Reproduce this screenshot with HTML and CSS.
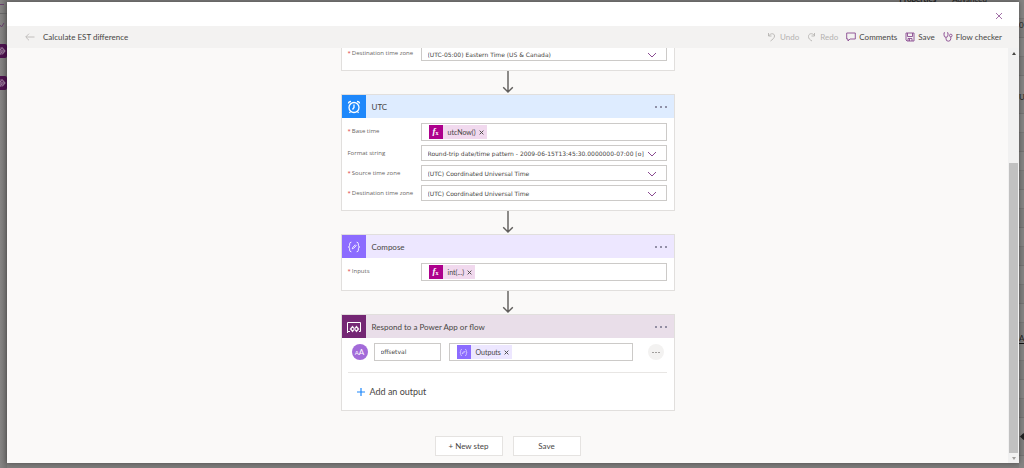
FILE: index.html
```html
<!DOCTYPE html>
<html lang="en">
<head>
<meta charset="utf-8">
<title>Calculate EST difference</title>
<link rel="stylesheet" href="styles.css">
</head>
<body>
<svg class="defs" aria-hidden="true">
  <symbol id="chevron" viewBox="0 0 10 6"><path d="M1 1l4 4 4-4"/></symbol>
  <symbol id="down" viewBox="0 0 14 24"><path d="M7 0v22M2 17l5 5 5-5"/></symbol>
  <symbol id="cross" viewBox="0 0 8 8"><path d="M1 1l6 6M7 1L1 7"/></symbol>
  <symbol id="braces" viewBox="0 0 16 16"><path d="M5 2.500Q3 2.500 3 4.500v1.500Q3 8 1.500 8 3 8 3 10v1.500q0 2 2 2M11 2.500q2 0 2 2v1.500q0 2 1.500 2-1.500 0-1.500 2v1.500q0 2-2 2M6 10l.5-1.500L9.500 5.500l1 1-3 3z"/></symbol>
  <symbol id="diamonds" viewBox="0 0 10 10"><path d="M4 1.500L.8 5 4 8.500 6 6.200M6 8.500L9.200 5 6 1.500 4 3.800M4 3.500L5.500 5 4 6.500 2.500 5zM6 3.500L7.500 5 6 6.500"/></symbol>
</svg>

<div class="page-behind" aria-hidden="true">
  <div class="rail">
    <i class="rail-dash"></i><i class="rail-line"></i>
    <svg class="rail-pen" viewBox="0 0 5 6"><path d="M0 3l1.500 2L4 1"/></svg>
    <span class="rail-tile tile-a"><svg viewBox="0 0 10 10"><use href="#diamonds"/></svg></span>
    <span class="rail-tile tile-b"><svg viewBox="0 0 10 10"><use href="#diamonds"/></svg></span>
  </div>
  <div class="tabs"><b>Properties</b><span>Advanced</span></div>
  <div class="props"><span class="prop-a">0</span><span class="prop-b">U</span><span class="prop-c">A</span><i class="prop-d"></i></div>
</div>

<main class="dialog">
  <header class="titlebar">
    <button class="close" aria-label="Close"><svg viewBox="0 0 8 8"><use href="#cross"/></svg></button>
  </header>
  <div class="toolbar">
    <button class="back" aria-label="Back"><svg viewBox="0 0 10 8"><path d="M9.500 4H1M4 .7L.7 4 4 7.300"/></svg></button>
    <h1>Calculate EST difference</h1>
    <div class="commands">
      <button class="off" disabled><svg viewBox="0 0 10 10"><path d="M1.500 1v3h3M1.500 4C3.500 1 7.500 1 7.500 4c0 2-2 3.500-4 5"/></svg>Undo</button>
      <button class="off" disabled><svg viewBox="0 0 10 10"><path d="M7.500 1v3h-3M7.500 3.500C5 .5 1.500 1.500 1.500 4.500c0 2 1 3 3.500 4.500"/></svg>Redo</button>
      <button><svg viewBox="0 0 10 10"><path d="M.7 1h8.600v6H4L2 9V7H.7z"/></svg>Comments</button>
      <button><svg viewBox="0 0 10 10"><path d="M1 1h8v8H2L1 8zM2.500 1v3.500h5V1M3 9V6.500h4V9M4.500 7v2"/></svg>Save</button>
      <button><svg viewBox="0 0 10 10"><path d="M2 .8H1V3q0 2.300 2 2.300T5 3V.8H4M3 5.300v1.500q0 2.400 2.300 2.400t2.500-2.400V5"/><circle cx="7.800" cy="3.500" r="1.300"/></svg>Flow checker</button>
    </div>
  </div>

  <div class="workspace">
    <div class="canvas">
      <section class="card card-cut">
        <div class="fields">
          <div class="field">
            <label for="tz0"><em>*</em>Destination time zone</label>
            <div class="pick"><select id="tz0"><option>(UTC-05:00) Eastern Time (US &amp; Canada)</option></select><svg viewBox="0 0 10 6"><use href="#chevron"/></svg></div>
          </div>
        </div>
      </section>
      <svg class="arrow" viewBox="0 0 14 24"><use href="#down"/></svg>

      <section class="card">
        <header class="card-head utc">
          <span class="badge"><svg viewBox="0 0 16 16"><circle cx="8" cy="8.500" r="5"/><path d="M8 5.500v3L6.500 10.500M2.500 4.500Q2.500 2.500 5 2.500M13.500 4.500Q13.500 2.500 11 2.500M4.500 12.500L3.500 14M11.500 12.500l1 1.500"/></svg></span>
          <h2>UTC</h2><button class="more" aria-label="UTC menu"><i></i><i></i><i></i></button>
        </header>
        <div class="fields">
          <div class="field">
            <label for="base"><em>*</em>Base time</label>
            <div class="box"><span class="token fx"><b><i>f</i><sub>x</sub></b>utcNow()<button aria-label="Remove utcNow()"><svg viewBox="0 0 8 8"><use href="#cross"/></svg></button></span><input id="base"></div>
          </div>
          <div class="field">
            <label for="fmt">Format string</label>
            <div class="pick"><select id="fmt"><option>Round-trip date/time pattern - 2009-06-15T13:45:30.0000000-07:00 [o]</option></select><svg viewBox="0 0 10 6"><use href="#chevron"/></svg></div>
          </div>
          <div class="field">
            <label for="src"><em>*</em>Source time zone</label>
            <div class="pick"><select id="src"><option>(UTC) Coordinated Universal Time</option></select><svg viewBox="0 0 10 6"><use href="#chevron"/></svg></div>
          </div>
          <div class="field">
            <label for="dst"><em>*</em>Destination time zone</label>
            <div class="pick"><select id="dst"><option>(UTC) Coordinated Universal Time</option></select><svg viewBox="0 0 10 6"><use href="#chevron"/></svg></div>
          </div>
        </div>
      </section>
      <svg class="arrow" viewBox="0 0 14 24"><use href="#down"/></svg>

      <section class="card">
        <header class="card-head compose">
          <span class="badge"><svg viewBox="0 0 16 16"><use href="#braces"/></svg></span>
          <h2>Compose</h2><button class="more" aria-label="Compose menu"><i></i><i></i><i></i></button>
        </header>
        <div class="fields">
          <div class="field">
            <label for="inputs"><em>*</em>Inputs</label>
            <div class="box"><span class="token fx"><b><i>f</i><sub>x</sub></b>int(...)<button aria-label="Remove int(...)"><svg viewBox="0 0 8 8"><use href="#cross"/></svg></button></span><input id="inputs"></div>
          </div>
        </div>
      </section>
      <svg class="arrow" viewBox="0 0 14 24"><use href="#down"/></svg>

      <section class="card">
        <header class="card-head respond">
          <span class="badge"><svg viewBox="0 0 16 16"><path d="M4 12.500H1.500v-9h13v9H13M1.500 12.500V14"/><path class="solid" d="M6.500 6.500l3 3.500-3 3.500-3-3.500zM10.500 6.500l3 3.500-3 3.500-3-3.500z"/><path class="hole" d="M6.500 8.800L7.600 10l-1.100 1.200L5.400 10zM10.500 8.800l1.100 1.200-1.100 1.200L9.400 10z"/></svg></span>
          <h2>Respond to a Power App or flow</h2><button class="more" aria-label="Respond menu"><i></i><i></i><i></i></button>
        </header>
        <div class="output">
          <span class="kind"><small>A</small>A</span>
          <input class="name" aria-label="Output name" value="offsetval">
          <div class="box"><span class="token out"><b><svg viewBox="0 0 16 16"><use href="#braces"/></svg></b>Outputs<button aria-label="Remove Outputs"><svg viewBox="0 0 8 8"><use href="#cross"/></svg></button></span><input aria-label="Output value"></div>
          <button class="round" aria-label="Output menu"><i></i><i></i><i></i></button>
        </div>
        <button class="add"><svg viewBox="0 0 8 8"><path d="M4 0v8M0 4h8"/></svg>Add an output</button>
      </section>

      <div class="actions"><button>+ New step</button><button>Save</button></div>
    </div>
    <div class="scroll" aria-hidden="true"><i class="up"></i><i class="thumb"></i><i class="dn"></i></div>
  </div>
</main>
</body>
</html>
```
FILE: styles.css
```css
* { box-sizing: border-box; }
body {
  margin: 0;
  height: 100vh;
  padding: 2px 5px 5px 7px;
  overflow: hidden;
  background: #7d7c7b;
  color: #484644;
  font-family: Lato, "Open Sans", sans-serif;
  font-size: 8px;
}
button, input, select { font: inherit; color: inherit; margin: 0; padding: 0; border: 0; background: none; }
h1, h2 { margin: 0; font-size: 8px; line-height: 12px; font-weight: 400; }
svg { fill: none; stroke: currentColor; flex: none; display: block; }
.defs { position: absolute; width: 0; height: 0; }

/* dimmed page under the dialog */
.page-behind { position: absolute; inset: 0; overflow: hidden; color: #222; }
.rail { position: absolute; left: 0; top: 0; bottom: 0; width: 7px; background: linear-gradient(90deg, #858483, #737271); overflow: hidden; }
.rail-dash { position: absolute; left: 0; top: 4px; width: 4px; height: 1px; background: #67406b; }
.rail-line { position: absolute; left: 0; top: 13px; width: 7px; height: 1px; background: #666; }
.rail-pen { position: absolute; left: 0; top: 22px; width: 5px; height: 6px; color: #67406b; }
.rail-tile { position: absolute; left: -6px; width: 13px; height: 14px; border-radius: 2px; background: #4b124d; color: #b3a1b4; }
.rail-tile svg { width: 10px; height: 10px; margin: 2px; }
.tile-a { top: 44px; }
.tile-b { top: 76px; }
.tabs { position: absolute; top: -6px; right: 37px; display: flex; gap: 16px; font-size: 8px; line-height: 11px; }
.props {
  position: absolute; right: 0; top: 0; bottom: 0; width: 5px; overflow: hidden;
  background: repeating-linear-gradient(#858483 0 18px, #777675 18px 19px, #7f7e7d 19px 37px, #747372 37px 38px);
}
.props span { position: absolute; left: 0; line-height: 10px; }
.prop-a { top: 20px; }
.prop-b { top: 92px; }
.props .prop-c { top: 333px; border-bottom: 1px solid #111; }
.prop-d { position: absolute; top: 434px; left: 2px; width: 5px; height: 5px; background: #222; transform: rotate(45deg); }

.dialog { position: relative; display: flex; flex-direction: column; height: 100%; background: #faf9f8; box-shadow: 0 0 5px rgba(0, 0, 0, .4); }
.titlebar { display: flex; flex: none; justify-content: flex-end; align-items: center; height: 24px; padding: 4px 16px 0 0; background: #fff; }
.close { color: #8a4b91; }
.close svg { width: 8px; height: 8px; stroke-width: .8; }
.toolbar { display: flex; flex: none; align-items: center; height: 22px; padding: 0 17px 0 18px; background: #f3f2f1; }
.back { color: #b5b3b1; margin-right: 8px; }
.back svg { width: 10px; height: 8px; stroke-width: .8; }
.commands { display: flex; gap: 8px; margin-left: auto; }
.commands button { display: flex; align-items: center; gap: 3px; line-height: 12px; }
.commands svg { width: 10px; height: 10px; color: #8a4b91; stroke-width: .9; }
.commands .off, .commands .off svg { color: #b5b3b1; }

.workspace { display: flex; flex: 1; min-height: 0; }
.canvas { display: flex; flex: 1; flex-direction: column; align-items: center; overflow: hidden; }
.canvas > * { flex: none; }
.card { width: 334px; max-width: 100%; border: 1px solid #e1dfdd; background: #fff; }
.card-cut { border-top: 0; }
.card-cut .fields { padding-top: 0; }
.card-cut .pick select { border-top: 0; height: 13px; }
.card-cut .field label { padding-top: 1px; }
.arrow { width: 14px; height: 23px; color: #605e5c; stroke-width: 1.500; }

.card-head { display: flex; align-items: center; height: 23px; padding-right: 7px; }
.card-head h2 { flex: 1; margin-left: 6px; }
.badge { display: grid; place-items: center; width: 24px; height: 23px; color: #fff; }
.badge svg { width: 16px; height: 16px; stroke-width: 1; }
.utc { background: #deecff; }
.utc .badge { background: #1e88fb; }
.utc .badge svg { stroke-width: 1.300; }
.compose { background: #ede7ff; }
.compose .badge { background: #8c6cff; }
.compose .badge svg { width: 14px; height: 14px; }
.respond { background: #e9dee9; }
.respond .badge { background: #742774; }
.solid { fill: #fff; stroke: #742774; stroke-width: .4; }
.hole { fill: #742774; stroke: none; }
.more { display: flex; gap: 3px; }
.more i { width: 2px; height: 2px; border-radius: 1px; background: #75728a; }

.fields { display: grid; gap: 4px; padding: 5px 7px 9px 6px; }
.field { display: grid; grid-template-columns: 73px 1fr; }
.field label { font-family: "Open Sans", sans-serif; font-size: 6px; line-height: 9px; padding-top: 4px; white-space: nowrap; color: #686664; }
.field em { margin-right: 1px; color: #e04040; font-style: normal; }
.box { display: flex; align-items: center; flex: 1; min-width: 0; height: 18px; padding: 0 7px; border: 1px solid #cccac8; background: #fff; }
.box input { flex: 1; min-width: 0; }
.pick { position: relative; min-width: 0; }
.pick select { display: block; width: 100%; height: 16px; padding: 0 20px 0 6px; border: 1px solid #cccac8; border-radius: 0; appearance: none; background: #fff; font-family: "DejaVu Sans", sans-serif; font-size: 6px; }
.pick svg { position: absolute; right: 10px; top: 6px; width: 10px; height: 6px; color: #8a4b91; pointer-events: none; }
.card-cut .pick svg { top: 4px; }
.token { display: flex; align-items: center; height: 14px; padding-right: 3px; font-size: 7px; white-space: nowrap; }
.token b { display: grid; grid-auto-flow: column; place-content: center; width: 14px; height: 14px; margin-right: 5px; color: #fff; font-family: "Liberation Serif", serif; font-size: 9px; line-height: 12px; }
.token sub { font-size: 6px; line-height: 12px; padding-top: 2px; vertical-align: baseline; }
.token b svg { width: 9px; height: 9px; }
.token button svg { width: 5px; height: 5px; margin-left: 3px; stroke-width: 1.500; }
.fx { background: #f1d9ee; }
.fx b { background: #ad008c; }
.out { background: #ede7ff; }
.out b { background: #8c6cff; }

.output { display: flex; align-items: center; margin: 0 7px 0 6px; padding: 5px 0 11px 4px; border-bottom: 1px solid #e8e6e4; }
.kind { display: grid; grid-auto-flow: column; place-content: center; align-items: baseline; width: 16px; height: 16px; border-radius: 50%; background: #a36bd9; color: #fff; line-height: 16px; }
.kind small { font-size: 6px; }
.name { width: 67px; height: 18px; margin: 0 8px 0 6px; padding: 0 6px 2px; border: 1px solid #cccac8; font-family: "DejaVu Sans", sans-serif; font-size: 6px; }
.round { display: flex; justify-content: center; align-items: center; gap: 1px; width: 16px; height: 16px; margin: 0 3px 0 15px; border-radius: 50%; background: #f3f2f1; }
.round i { width: 2px; height: 1px; background: #a19f9d; }
.add { display: flex; align-items: center; gap: 5px; margin: 12px 0 12px 15px; font-size: 9px; line-height: 13px; }
.add svg { width: 8px; height: 8px; color: #1e88fb; stroke-width: 1.200; }

.actions { display: flex; gap: 10px; margin-top: 25px; }
.actions button { width: 68px; height: 20px; border: 1px solid #e5e3e1; background: #fff; font-size: 8px; }

.scroll { display: flex; flex-direction: column; align-items: center; width: 11px; padding: 4px 1px 3px; background: #f1f1f1; }
.scroll .up, .scroll .dn { border: 2px solid transparent; }
.scroll .up { border-top-width: 0; border-bottom: 3px solid #484644; }
.scroll .dn { border-bottom-width: 0; border-top: 3px solid #a19f9d; margin-top: 4px; }
.scroll .thumb { width: 100%; flex: 0 1 290px; margin-top: auto; background: #c1c1c1; }
```
